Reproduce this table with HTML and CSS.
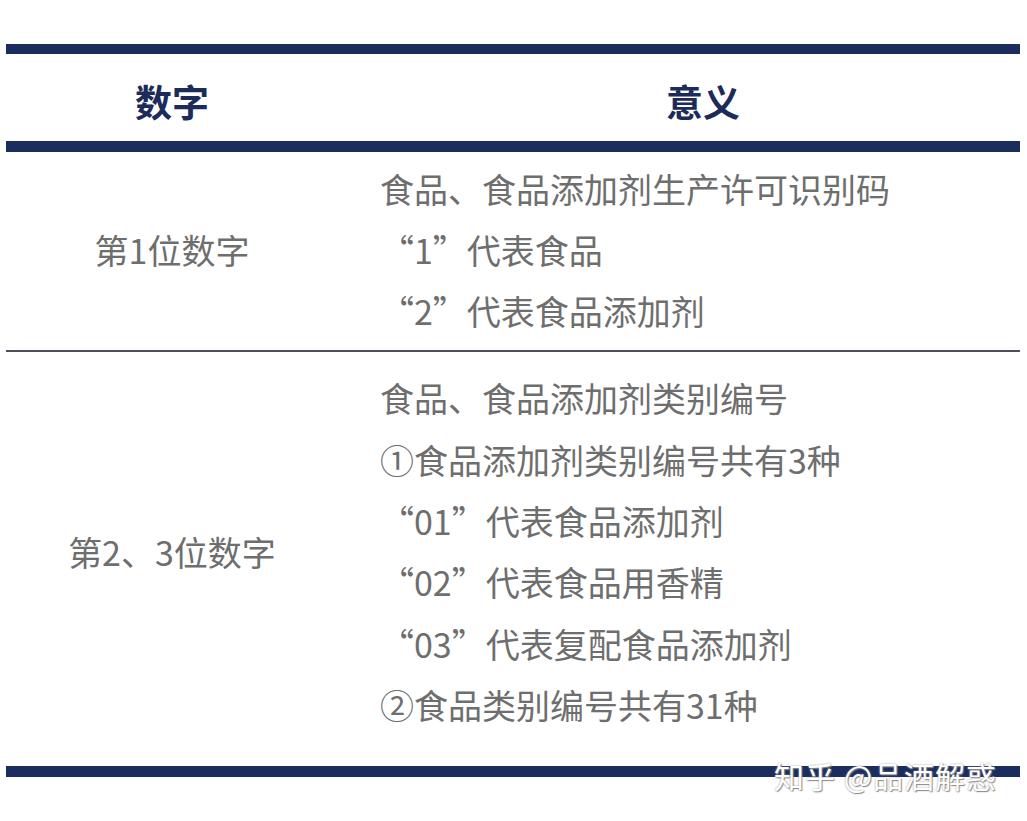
FILE: index.html
```html
<!DOCTYPE html>
<html lang="zh-CN">
<head>
<meta charset="utf-8">
<title>食品生产许可证编号</title>
<link rel="stylesheet" href="styles.css">
</head>
<body>
<div class="page">
  <div class="table">
    <div class="bar bar-top"></div>
    <div class="row head">
      <div class="c1">数字</div>
      <div class="c2">意义</div>
    </div>
    <div class="bar"></div>
    <div class="row body r1">
      <div class="c1">第1位数字</div>
      <div class="c2">
        <div class="line">食品、食品添加剂生产许可识别码</div>
        <div class="line">“1”代表食品</div>
        <div class="line">“2”代表食品添加剂</div>
      </div>
    </div>
    <div class="rule"></div>
    <div class="row body r2">
      <div class="c1">第2、3位数字</div>
      <div class="c2">
        <div class="line">食品、食品添加剂类别编号</div>
        <div class="line">①食品添加剂类别编号共有3种</div>
        <div class="line">“01”代表食品添加剂</div>
        <div class="line">“02”代表食品用香精</div>
        <div class="line">“03”代表复配食品添加剂</div>
        <div class="line">②食品类别编号共有31种</div>
      </div>
    </div>
    <div class="bar"></div>
  </div>
  <div class="watermark">知乎 @品酒解惑</div>
</div>
</body>
</html>
```

FILE: styles.css
```css
html, body {
  margin: 0;
  padding: 0;
  background: #ffffff;
}

.page {
  position: relative;
  width: 1027px;
  height: 821px;
  overflow: hidden;
  font-family: "Noto Sans CJK SC", "Noto Sans", sans-serif;
}

.table {
  margin-left: 6px;
  width: 1014px;
  padding-top: 44px;
}

.bar {
  height: 11px;
  background: #1b2d5f;
}

.bar-top {
  height: 10px;
}

.rule {
  height: 2px;
  background: #4b505b;
}

.row {
  display: grid;
  grid-template-columns: 332px 1fr;
}

.head {
  height: 87px;
  align-items: center;
  color: #1c2c5a;
  font-weight: 700;
  font-size: 37px;
  line-height: 40px;
}

.head .c1 {
  text-align: center;
  padding-top: 6px;
}

.head .c2 {
  text-align: center;
  padding-left: 48px;
  padding-top: 6px;
}

.body {
  color: #6e6e6e;
  font-size: 34px;
  line-height: 61.4px;
  align-items: center;
}

.body .c1 {
  text-align: center;
}

.body .c2 {
  padding-left: 42px;
}

.line {
  white-space: nowrap;
}

.r1 {
  padding-top: 5.5px;
  padding-bottom: 8.5px;
}

.r2 {
  padding-top: 15px;
  padding-bottom: 30.5px;
}

.watermark {
  position: absolute;
  left: 774px;
  top: 755px;
  font-size: 30px;
  line-height: 40px;
  color: #ffffff;
  letter-spacing: 1px;
  text-shadow: 1px 1px 1px #8a8a8a, 0 0 2px #9a9a9a;
  white-space: nowrap;
}
```
